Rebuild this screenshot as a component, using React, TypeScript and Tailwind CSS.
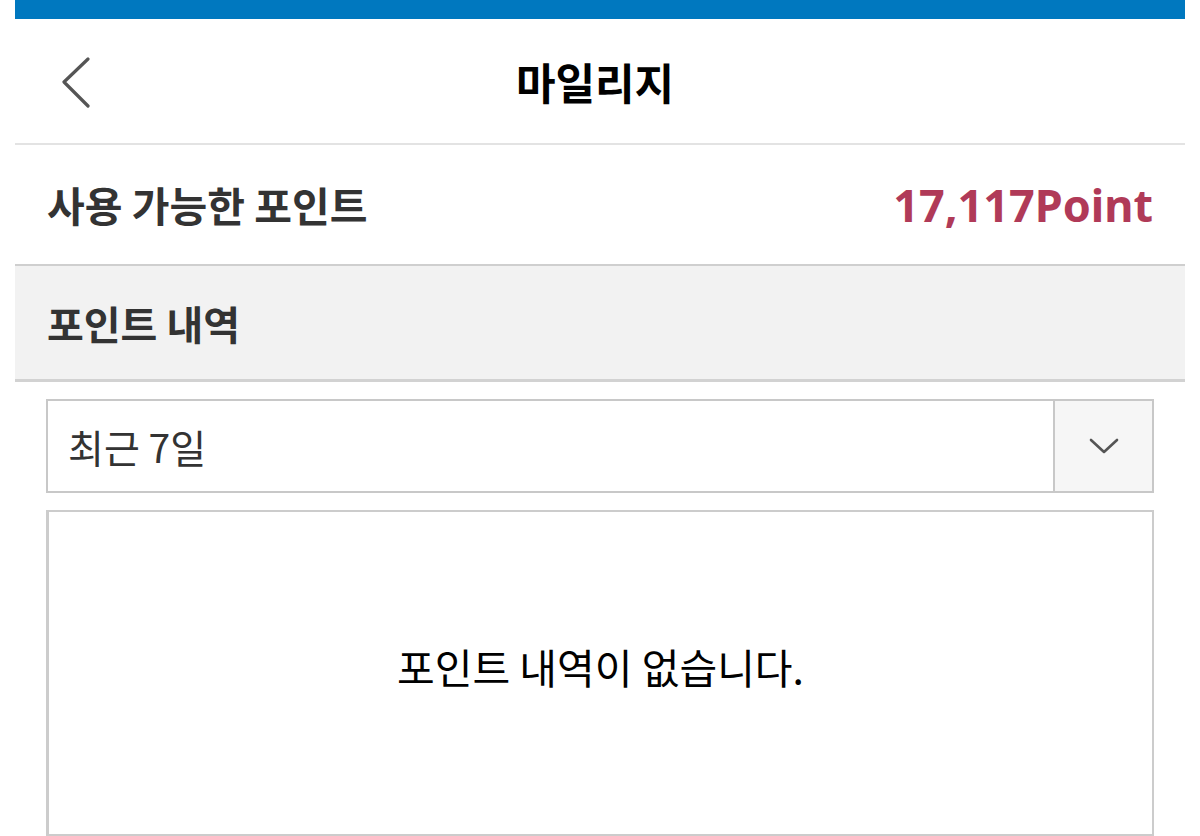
export default function App() {
  return (
    <div className="min-h-[836px] bg-white font-['Noto_Sans_CJK_KR','Noto_Sans',sans-serif]">
      <div className="mx-[15px]">
        <div className="h-[19px] bg-[#0078bf]" />

        <div className="relative flex h-[126px] items-center justify-center border-b-2 border-[#e3e3e3] pr-[10px]">
          <button className="absolute left-[41px] top-[36px] flex h-[56px] w-[40px] items-center justify-center">
            <svg width="30" height="52" viewBox="0 0 30 52" fill="none">
              <path d="M27 2 L3 25 L27 49" stroke="#555" strokeWidth="3.2" strokeLinecap="round" strokeLinejoin="round" />
            </svg>
          </button>
          <h1 className="text-[43px] font-bold text-black">마일리지</h1>
        </div>

        <div className="flex h-[121px] items-center justify-between border-b-2 border-[#cfcfcf] pl-[32px] pr-[32px]">
          <span className="text-[41px] font-bold text-[#333]">사용 가능한 포인트</span>
          <span className="font-['Noto_Sans',sans-serif] text-[45px] font-bold text-[#b03a58]">17,117Point</span>
        </div>

        <div className="flex h-[116px] items-center border-b-[3px] border-[#d2d2d2] bg-[#f2f2f2] pl-[32px]">
          <span className="text-[40px] font-bold text-[#333]">포인트 내역</span>
        </div>

        <div className="mx-[31px] mt-[17px] flex h-[94px] border-2 border-[#c8c8c8]">
          <div className="flex flex-1 items-center pl-[20px] text-[39px] text-[#333]">최근 7일</div>
          <div className="flex w-[99px] items-center justify-center border-l-2 border-[#c8c8c8] bg-[#f6f6f6]">
            <svg width="30" height="18" viewBox="0 0 30 18" fill="none">
              <path d="M2 3 L15 15 L28 3" stroke="#555" strokeWidth="2.6" strokeLinecap="round" strokeLinejoin="round" />
            </svg>
          </div>
        </div>

        <div className="mx-[31px] mt-[17px] flex h-[326px] items-center justify-center border-2 border-l-[3px] border-[#cccccc] pb-[12px]">
          <span className="text-[41px] text-black">포인트 내역이 없습니다.</span>
        </div>
      </div>
    </div>
  )
}
